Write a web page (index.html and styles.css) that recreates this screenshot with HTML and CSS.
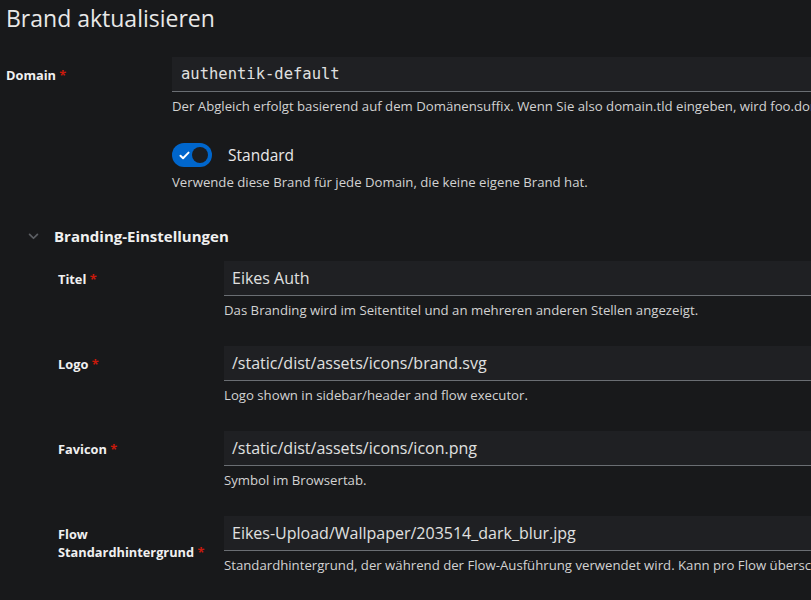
FILE: index.html
```html
<!DOCTYPE html>
<html lang="de">
<head>
<meta charset="utf-8">
<title>Brand aktualisieren</title>
<link rel="stylesheet" href="styles.css">
</head>
<body>
<div class="page">
  <h1 class="title">Brand aktualisieren</h1>
  <form class="form">
    <div class="group">
      <label class="label">Domain <span class="req">*</span></label>
      <div class="control">
        <div class="input mono">authentik-default</div>
        <div class="helper">Der Abgleich erfolgt basierend auf dem Domänensuffix. Wenn Sie also domain.tld eingeben, wird foo.domain.tld trotzdem übereinstimmen.</div>
      </div>
    </div>
    <div class="group">
      <div class="label"></div>
      <div class="control">
        <div class="switch-row">
          <span class="switch">
            <svg class="check" viewBox="0 0 12 10" width="11" height="9"><path d="M1.5 5.2 L4.4 8 L10.5 1.8" fill="none" stroke="#fff" stroke-width="2.2" stroke-linecap="round" stroke-linejoin="round"/></svg>
            <span class="knob"></span>
          </span>
          <span class="switch-label">Standard</span>
        </div>
        <div class="helper">Verwende diese Brand für jede Domain, die keine eigene Brand hat.</div>
      </div>
    </div>
    <div class="section">
      <div class="section-head">
        <svg class="chev" viewBox="0 0 12 8" width="11" height="7"><path d="M1.5 1.5 L6 6 L10.5 1.5" fill="none" stroke="#5b5e63" stroke-width="2" stroke-linecap="round" stroke-linejoin="round"/></svg>
        <span class="section-title">Branding-Einstellungen</span>
      </div>
      <div class="section-body">
        <div class="group">
          <label class="label">Titel <span class="req">*</span></label>
          <div class="control">
            <div class="input">Eikes Auth</div>
            <div class="helper">Das Branding wird im Seitentitel und an mehreren anderen Stellen angezeigt.</div>
          </div>
        </div>
        <div class="group">
          <label class="label">Logo <span class="req">*</span></label>
          <div class="control">
            <div class="input">/static/dist/assets/icons/brand.svg</div>
            <div class="helper">Logo shown in sidebar/header and flow executor.</div>
          </div>
        </div>
        <div class="group">
          <label class="label">Favicon <span class="req">*</span></label>
          <div class="control">
            <div class="input">/static/dist/assets/icons/icon.png</div>
            <div class="helper">Symbol im Browsertab.</div>
          </div>
        </div>
        <div class="group">
          <label class="label">Flow<br>Standardhintergrund <span class="req">*</span></label>
          <div class="control">
            <div class="input">Eikes-Upload/Wallpaper/203514_dark_blur.jpg</div>
            <div class="helper">Standardhintergrund, der während der Flow-Ausführung verwendet wird. Kann pro Flow überschrieben werden.</div>
          </div>
        </div>
      </div>
    </div>
  </form>
</div>
</body>
</html>
```
FILE: styles.css
```css
html, body {
  margin: 0;
  padding: 0;
  background: #18191b;
  overflow: hidden;
}
body {
  font-family: "Open Sans", "Noto Sans", sans-serif;
  color: #e0e0e0;
}
.page {
  width: 1300px;
  padding: 3px 0 0 6px;
}
.title {
  margin: 0;
  font-size: 23px;
  line-height: 30px;
  font-weight: 400;
  color: #e8e8e8;
}
.form {
  margin-top: 24px;
  display: flex;
  flex-direction: column;
  gap: 28px;
}
.group {
  display: grid;
  grid-template-columns: 166px 1fr;
}
.label {
  padding-top: 9px;
  font-size: 12.8px;
  line-height: 18px;
  font-weight: 700;
  color: #f0f0f0;
}
.req {
  color: #c9190b;
}
.control {
  display: flex;
  flex-direction: column;
}
.input {
  height: 35px;
  box-sizing: border-box;
  background: #1f2023;
  border-bottom: 1px solid #6a6e73;
  padding: 0 8px;
  font-size: 16px;
  line-height: 34px;
  color: #e0e0e0;
  white-space: nowrap;
}
.input.mono {
  font-family: "DejaVu Sans Mono", "Liberation Mono", monospace;
  font-size: 15.5px;
  padding: 0 9px;
}
.helper {
  margin-top: 5px;
  font-size: 13.2px;
  line-height: 18px;
  color: #d2d2d2;
  white-space: nowrap;
}
.switch-row {
  display: flex;
  align-items: center;
  gap: 16px;
  height: 24px;
}
.switch {
  position: relative;
  width: 40px;
  height: 24px;
  border-radius: 12px;
  background: #0066cc;
  display: inline-flex;
  align-items: center;
}
.check {
  margin-left: 7px;
}
.knob {
  position: absolute;
  right: 4px;
  top: 4px;
  width: 16px;
  height: 16px;
  border-radius: 50%;
  background: #1b1d21;
}
.switch-label {
  font-size: 15.5px;
  color: #e8e8e8;
}
.switch-row + .helper {
  margin-top: 6px;
}
.section {
  margin-top: 6px;
  padding-left: 22px;
}
.section-head {
  display: flex;
  align-items: center;
  height: 22px;
  gap: 15px;
}
.section-title {
  font-size: 15px;
  font-weight: 700;
  color: #f0f0f0;
}
.section-body {
  margin-top: 14px;
  padding-left: 30px;
  display: flex;
  flex-direction: column;
  gap: 27px;
}
```
